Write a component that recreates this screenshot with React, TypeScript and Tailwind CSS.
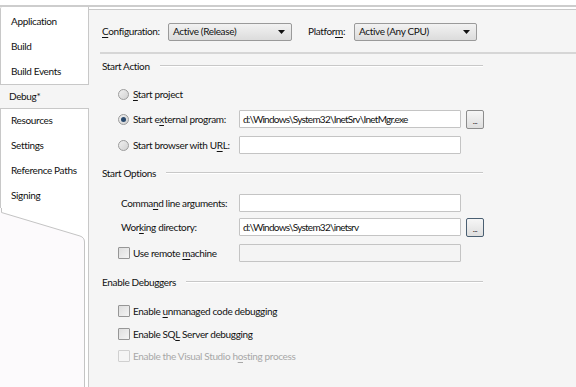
import React from 'react'

const tabs = ['Application', 'Build', 'Build Events', 'Debug*', 'Resources', 'Settings', 'Reference Paths', 'Signing']

const Key = ({ children }: { children: React.ReactNode }) => (
  <u className="underline underline-offset-[2px] decoration-[1px]">{children}</u>
)

const Dropdown = ({ value, width }: { value: string; width: string }) => (
  <div
    className={`${width} h-[18px] flex items-center justify-between pl-[4px] pr-[6px] rounded-[2px] border border-[#9a9a9a] bg-gradient-to-b from-[#f2f2f2] to-[#dcdcdc]`}
  >
    <span>{value}</span>
    <svg width="7" height="4" viewBox="0 0 7 4">
      <path d="M0 0h7L3.5 4z" fill="#111" />
    </svg>
  </div>
)

const TextBox = ({ value, disabled }: { value?: string; disabled?: boolean }) => (
  <div
    className={`w-[222px] h-[18px] flex items-center px-[3px] border border-[#c4c4c4] rounded-[1px] tracking-[-0.75px] ${
      disabled ? 'bg-[#f4f4f4]' : 'bg-white'
    }`}
  >
    {value}
  </div>
)

const Browse = ({ focused }: { focused?: boolean }) => (
  <div
    className={`w-[18px] h-[19px] ml-[5px] flex items-end justify-center pb-[3px] rounded-[2px] border bg-gradient-to-b from-[#f6f6f6] to-[#dedede] text-[8px] leading-none ${
      focused ? 'border-[#4a5f72] border-[1.5px]' : 'border-[#8c8c8c]'
    }`}
  >
    ...
  </div>
)

const Radio = ({ checked }: { checked?: boolean }) => (
  <div className="w-[11px] h-[11px] rounded-full border border-[#9c9c9c] bg-gradient-to-br from-[#f0f0f0] to-[#d2d2d2] flex items-center justify-center">
    {checked && <div className="w-[5px] h-[5px] rounded-full bg-[#2a4a6e]" />}
  </div>
)

const Check = ({ disabled }: { disabled?: boolean }) => (
  <div
    className={`w-[12px] h-[12px] border rounded-[1px] ${
      disabled ? 'border-[#d0d0d0] bg-[#f5f5f5]' : 'border-[#969696] bg-gradient-to-br from-[#dedede] to-[#f4f4f4]'
    }`}
  />
)

const Section = ({ title, className }: { title: string; className: string }) => (
  <div className={`flex items-center h-[14px] w-[381px] ${className}`}>
    <span>{title}</span>
    <div className="flex-1 ml-[10px] border-t border-[#c8c8c8] border-b border-b-white" />
  </div>
)

const Row = ({ children, className }: { children: React.ReactNode; className: string }) => (
  <div className={`flex items-center h-[18px] pl-[16px] ${className}`}>{children}</div>
)

export default function App() {
  return (
    <div className="w-[576px] h-[387px] bg-white overflow-hidden whitespace-nowrap font-['Lato',sans-serif] text-[10px] tracking-[-0.35px] text-[#111]">
      <div className="h-[5px]" />
      <div className="border-t-2 border-[#cdcdcd]" />
      <div className="flex h-[380px]">
        {/* tab strip */}
        <div className="w-[89px] flex flex-col">
          <div className="pt-[2px] border-l border-[#c8c8c8] rounded-tl-[3px] border-r border-r-[#c8c8c8]" />
          {tabs.map(t =>
            t === 'Debug*' ? (
              <div
                key={t}
                className="h-[25px] flex items-center pl-[10px] -ml-[1px] bg-[#f5f5f5] border-y border-[#c8c8c8]"
              >
                {t}
              </div>
            ) : (
              <div
                key={t}
                className="h-[25px] flex items-center pl-[10px] border-l border-[#c8c8c8] border-r"
              >
                {t}
              </div>
            )
          )}
          <div className="flex-1 border-r border-[#c8c8c8] relative">
            <svg width="88" height="179" viewBox="0 0 88 179" className="block">
              <path d="M0 0V179H84V34Q84 29 80 28L1 4V0Z" fill="#fcfafc" />
              <path d="M1.5 0V4.5L80 28Q84.5 29.5 84.5 34V179" fill="none" stroke="#c4c4c4" />
            </svg>
          </div>
        </div>

        {/* content */}
        <div className="flex-1 flex flex-col">
          <div className="h-[2px] bg-white" />
          <div className="flex-1 bg-[#f5f5f5] border-t border-[#c8c8c8] flex flex-col pl-[13px]">
            <div className="flex items-center mt-[12px] h-[19px]">
              <span className="w-[66px]">
                <Key>C</Key>onfiguration:
              </span>
              <Dropdown value="Active (Release)" width="w-[124px]" />
              <span className="ml-[16px] w-[46px]">
                Platfor<Key>m</Key>:
              </span>
              <Dropdown value="Active (Any CPU)" width="w-[123px]" />
            </div>
            <div className="mt-[11px] -ml-[2px] border-t-2 border-[#d6d6d6]" />

            <Section title="Start Action" className="mt-[5px]" />
            <Row className="mt-[12px]">
              <Radio />
              <span className="ml-[4px]">
                <Key>S</Key>tart project
              </span>
            </Row>
            <Row className="mt-[7px]">
              <Radio checked />
              <span className="ml-[4px] w-[106px]">
                Start e<Key>x</Key>ternal program:
              </span>
              <TextBox value="d:\Windows\System32\InetSrv\InetMgr.exe" />
              <Browse />
            </Row>
            <Row className="mt-[8px]">
              <Radio />
              <span className="ml-[4px] w-[106px]">
                Start browser with U<Key>R</Key>L:
              </span>
              <TextBox />
            </Row>

            <Section title="Start Options" className="mt-[12px]" />
            <Row className="mt-[14px]">
              <span className="ml-[3px] w-[118px]">
                Comma<Key>n</Key>d line arguments:
              </span>
              <TextBox />
            </Row>
            <Row className="mt-[6px]">
              <span className="ml-[3px] w-[118px]">
                Wor<Key>k</Key>ing directory:
              </span>
              <TextBox value="d:\Windows\System32\inetsrv" />
              <Browse focused />
            </Row>
            <Row className="mt-[8px]">
              <Check />
              <span className="ml-[3px] w-[106px]">
                Use remote <Key>m</Key>achine
              </span>
              <TextBox disabled />
            </Row>

            <Section title="Enable Debuggers" className="mt-[13px]" />
            <Row className="mt-[13px]">
              <Check />
              <span className="ml-[3px]">
                Enable <Key>u</Key>nmanaged code debugging
              </span>
            </Row>
            <Row className="mt-[5px]">
              <Check />
              <span className="ml-[3px]">
                Enable SQ<Key>L</Key> Server debugging
              </span>
            </Row>
            <Row className="mt-[4px]">
              <Check disabled />
              <span className="ml-[3px] text-[#a8a8a8]">
                Enable the Visual Studio h<Key>o</Key>sting process
              </span>
            </Row>
          </div>
        </div>
      </div>
    </div>
  )
}
